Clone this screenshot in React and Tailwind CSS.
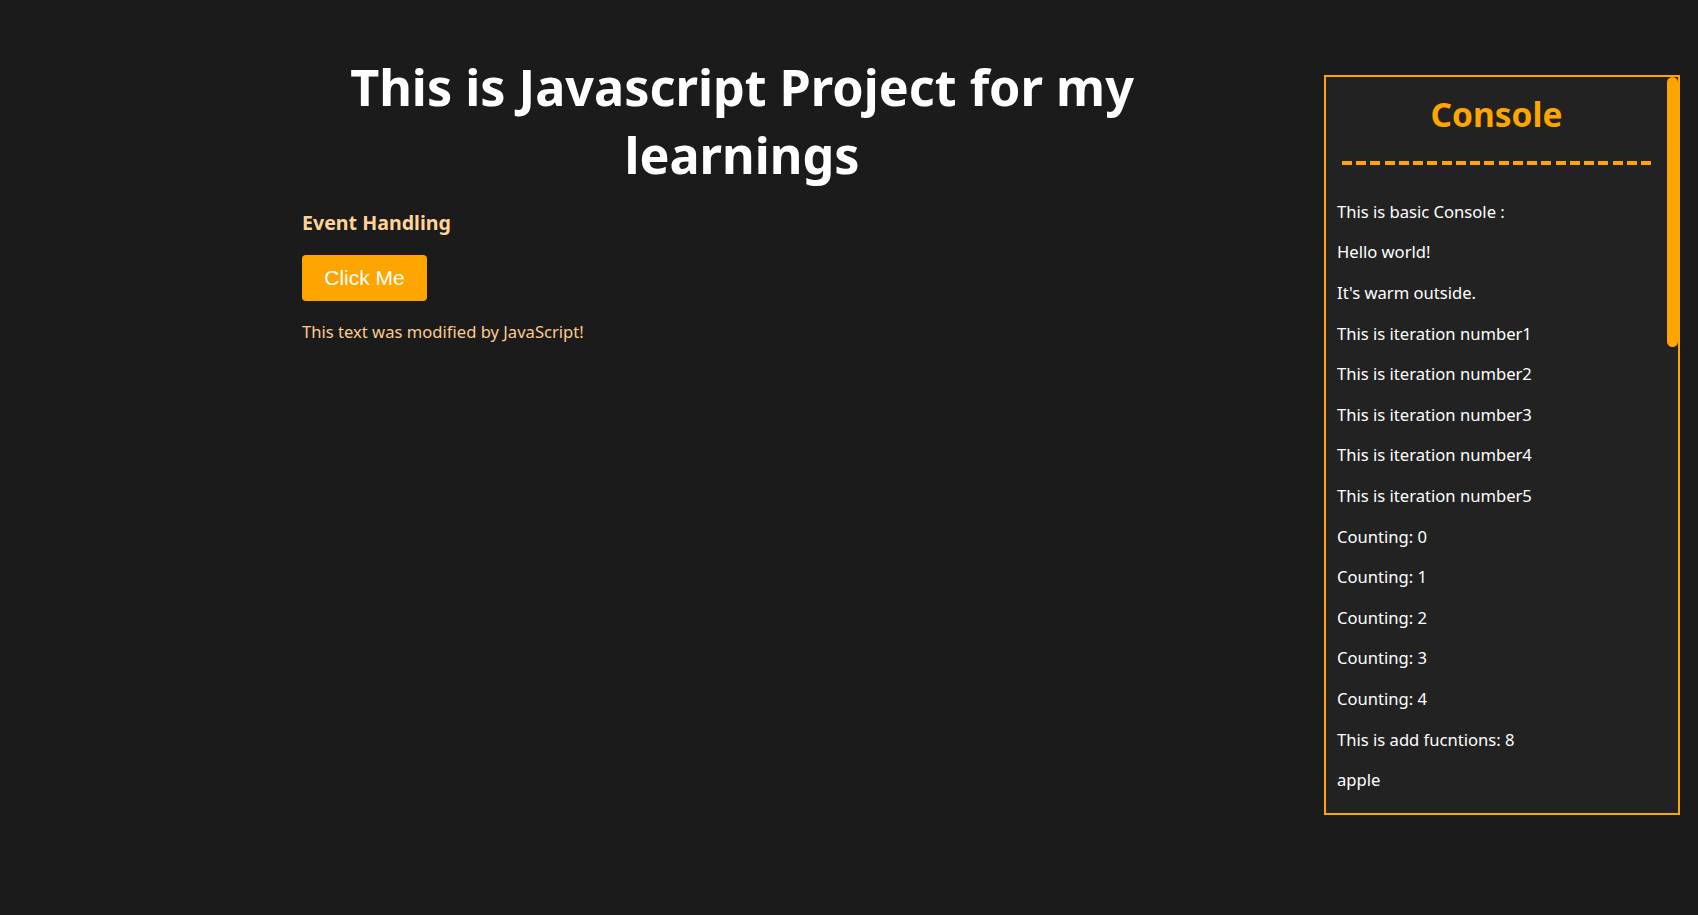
import React from 'react';

const LOGS = [
  'This is basic Console :',
  'Hello world!',
  "It's warm outside.",
  'This is iteration number1',
  'This is iteration number2',
  'This is iteration number3',
  'This is iteration number4',
  'This is iteration number5',
  'Counting: 0',
  'Counting: 1',
  'Counting: 2',
  'Counting: 3',
  'Counting: 4',
  'This is add fucntions: 8',
  'apple',
];

const ConsolePanel = () => (
  <aside className="mt-[75px] mr-[18px] ml-auto flex h-[740px] w-[356px] shrink-0 border-2 border-[#ffa500] bg-[#222222]">
    <div className="flex-1 px-[11px] pt-[12.7px]">
      <h2 className="text-center text-[33.5px] font-bold leading-[48px] text-[#ffa500]">Console</h2>
      <div className="mx-auto mt-[23.6px] h-[4px] w-[309px] bg-[repeating-linear-gradient(90deg,#ffa500_0_10px,transparent_10px_14.24px)]" />
      <div className="mt-[26.6px]">
        {LOGS.map((line, i) => (
          <p key={i} className="text-[16.6px] leading-[40.6px] text-white">{line}</p>
        ))}
      </div>
    </div>
    {/* scrollbar */}
    <div className="w-[11px]">
      <div className="h-[270px] rounded-full bg-[#ffa500]" />
    </div>
  </aside>
);

export default function App() {
  return (
    <div className="flex min-h-[915px] bg-[#1b1b1b] font-['Noto_Sans',sans-serif]">
      <main className="ml-[302px] w-[880px] shrink-0">
        <h1 className="mt-[52.6px] text-center text-[50.3px] font-bold leading-[68px] text-white">
          This is Javascript Project for my learnings
        </h1>
        <h3 className="mt-[20.6px] text-[19.6px] font-bold leading-[28px] text-[#ffd396]">Event Handling</h3>
        <button className="mt-[17.8px] h-[46px] w-[125px] rounded-[4px] bg-[#ffa500] font-['Liberation_Sans',Arial,sans-serif] text-[21px] text-white">
          Click Me
        </button>
        <p className="mt-[16.6px] text-[16.6px] leading-[28px] text-[#fccb8e]">This text was modified by JavaScript!</p>
      </main>
      <ConsolePanel />
    </div>
  );
}
